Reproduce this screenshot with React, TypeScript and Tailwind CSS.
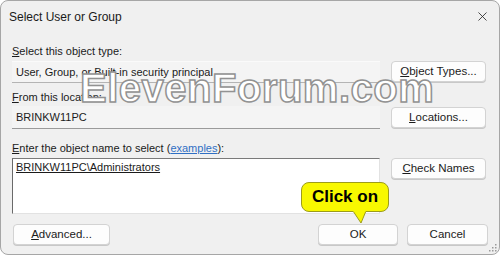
import { X } from 'lucide-react';

const FONT = { fontFamily: '"Liberation Sans", Arial, sans-serif' };

function Btn({ children, className = '' }: { children: React.ReactNode; className?: string }) {
  return (
    <div
      className={`flex h-[21px] items-center justify-center rounded-[4px] border border-[#d3d3d3] bg-[#fdfdfd] text-[11.5px] text-[#1b1b1b] shadow-[0_1px_0_#c8c8c8] ${className}`}
    >
      {children}
    </div>
  );
}

export default function App() {
  return (
    <div className="h-[255px] w-[500px] bg-white" style={FONT}>
      <div className="relative flex h-[255px] w-[500px] flex-col overflow-hidden rounded-[8px] border border-[#a6a6a6] bg-[#f0f0f0]">
        {/* title bar */}
        <div className="flex h-[31px] items-center justify-between pl-[8px] pr-[9px]">
          <span className="text-[12px] text-[#1a1a1a]">Select User or Group</span>
          <X size={15} strokeWidth={1.3} className="text-[#222]" />
        </div>

        <div className="grid grid-cols-[368px_95px] gap-x-[11px] pl-[11px] text-[11px] text-[#1b1b1b]">
          {/* object type */}
          <div className="col-span-2 mt-[11px] h-[16px] leading-[16px]">
            <span className="underline">S</span>elect this object type:
          </div>
          <div className="mt-[2px] flex h-[22px] items-center border-t border-t-[#fafafa] border-b border-b-[#b4b4b4] bg-[#f4f4f4] pl-[4px]">
            User, Group, or Built-in security principal
          </div>
          <Btn className="mt-[2px]">
            <span className="underline">O</span>bject Types...
          </Btn>

          {/* location */}
          <div className="col-span-2 mt-[6px] h-[16px] leading-[16px]">
            <span className="underline">F</span>rom this location:
          </div>
          <div className="mt-[1px] flex h-[23px] items-center border-b border-b-[#9a9a9a] bg-[#f4f4f4] pl-[4px]">
            BRINKW11PC
          </div>
          <Btn className="mt-[2px]">
            <span className="underline">L</span>ocations...
          </Btn>

          {/* object name */}
          <div className="col-span-2 mt-[11px] h-[16px] leading-[16px]">
            <span className="underline">E</span>nter the object name to select (
            <span className="text-[#2f6fc4] underline">examples</span>):
          </div>
          <div className="mt-[2px] h-[56px] border-t border-l border-t-[#7a7a7a] border-l-[#6a6a6a] border-r border-b border-r-[#e2e2e2] border-b-[#e2e2e2] bg-white pl-[3px] pt-[1px] leading-[15px]">
            <span className="underline">BRINKW11PC\Administrators</span>
          </div>
          <div className="mt-[2px]">
            <Btn>
              <span className="underline">C</span>heck Names
            </Btn>
          </div>
        </div>

        {/* bottom buttons */}
        <div className="mt-[10px] flex pl-[12px]">
          <Btn className="w-[97px]">
            <span className="underline">A</span>dvanced...
          </Btn>
          <Btn className="ml-[208px] w-[80px]">OK</Btn>
          <Btn className="ml-[9px] w-[81px]">Cancel</Btn>
        </div>

        {/* resize grip */}
        <svg className="absolute bottom-[2px] right-[2px]" width="10" height="10" viewBox="0 0 10 10">
          {[
            [8, 2],
            [5, 5],
            [8, 5],
            [2, 8],
            [5, 8],
            [8, 8],
          ].map(([x, y]) => (
            <rect key={`${x}-${y}`} x={x} y={y} width="1.5" height="1.5" fill="#9a9a9a" />
          ))}
        </svg>

        {/* watermark */}
        <div className="pointer-events-none absolute left-[79px] top-[63px] text-[40px] font-bold leading-[48px] tracking-[0.5px] text-white [-webkit-text-stroke:1.5px_#929292]">
          ElevenForum.com
        </div>

        {/* callout */}
        <div className="absolute left-[300px] top-[181px]">
          <div className="flex h-[30px] w-[88px] items-center justify-center rounded-[8px] border border-[#9c9c1a] bg-[#f8f800] text-[17px] font-bold text-black">
            Click on
          </div>
          <svg className="absolute left-[51px] top-[28px]" width="16" height="14" viewBox="0 0 16 14">
            <path d="M1 1 L9 13 L14 1" fill="#f8f800" stroke="#9c9c1a" strokeWidth="1" />
            <rect x="1.5" y="0" width="12" height="2" fill="#f8f800" />
          </svg>
        </div>
      </div>
    </div>
  );
}
